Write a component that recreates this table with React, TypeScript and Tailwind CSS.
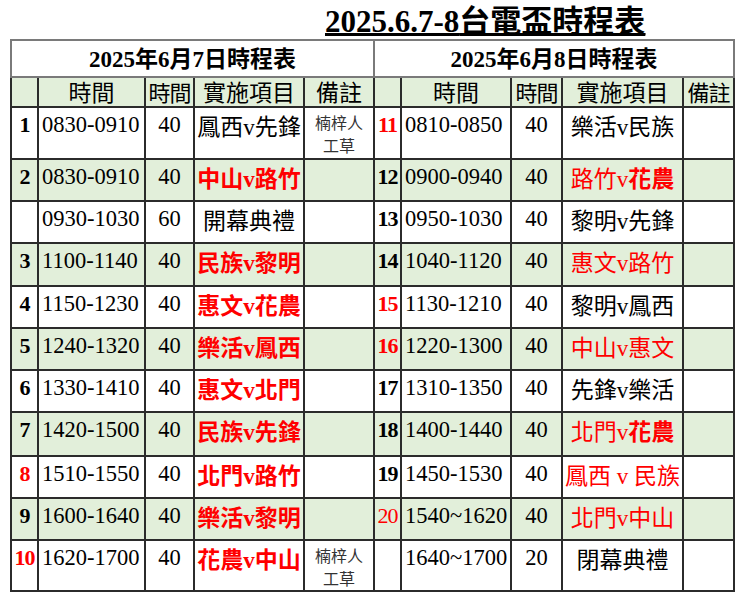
import React from 'react';

type Part = { t: string; bold?: boolean; serif?: boolean };

interface Row {
  no: string;
  noRed?: boolean;
  noBold?: boolean;
  time: string;
  mins: string;
  match: Part[];
  red?: boolean;
  note?: boolean;
}

const SERIF = "font-['Liberation_Serif','Noto_Sans_CJK_TC',serif]";
const SANS = "font-['Noto_Sans_CJK_TC','Noto_Sans',sans-serif]";

// "A v B" helper — the v is set in the serif face like the sheet
const m = (a: string, b: string, opts: { bold?: boolean; boldB?: boolean; spaced?: boolean } = {}): Part[] => [
  { t: a, bold: opts.bold },
  { t: opts.spaced ? ' v ' : 'v', serif: true, bold: opts.bold },
  { t: b, bold: opts.bold || opts.boldB },
];

const day7: Row[] = [
  { no: '1', time: '0830-0910', mins: '40', match: m('鳳西', '先鋒'), note: true },
  { no: '2', time: '0830-0910', mins: '40', match: m('中山', '路竹', { bold: true }), red: true },
  { no: '', time: '0930-1030', mins: '60', match: [{ t: '開幕典禮' }] },
  { no: '3', time: '1100-1140', mins: '40', match: m('民族', '黎明', { bold: true }), red: true },
  { no: '4', time: '1150-1230', mins: '40', match: m('惠文', '花農', { bold: true }), red: true },
  { no: '5', time: '1240-1320', mins: '40', match: m('樂活', '鳳西', { bold: true }), red: true },
  { no: '6', time: '1330-1410', mins: '40', match: m('惠文', '北門', { bold: true }), red: true },
  { no: '7', time: '1420-1500', mins: '40', match: m('民族', '先鋒', { bold: true }), red: true },
  { no: '8', noRed: true, time: '1510-1550', mins: '40', match: m('北門', '路竹', { bold: true }), red: true },
  { no: '9', time: '1600-1640', mins: '40', match: m('樂活', '黎明', { bold: true }), red: true },
  { no: '10', noRed: true, time: '1620-1700', mins: '40', match: m('花農', '中山', { bold: true }), red: true, note: true },
];

const day8: Row[] = [
  { no: '11', noRed: true, time: '0810-0850', mins: '40', match: m('樂活', '民族') },
  { no: '12', time: '0900-0940', mins: '40', match: m('路竹', '花農', { boldB: true }), red: true },
  { no: '13', time: '0950-1030', mins: '40', match: m('黎明', '先鋒') },
  { no: '14', time: '1040-1120', mins: '40', match: m('惠文', '路竹'), red: true },
  { no: '15', noRed: true, time: '1130-1210', mins: '40', match: m('黎明', '鳳西') },
  { no: '16', noRed: true, time: '1220-1300', mins: '40', match: m('中山', '惠文'), red: true },
  { no: '17', time: '1310-1350', mins: '40', match: m('先鋒', '樂活') },
  { no: '18', time: '1400-1440', mins: '40', match: m('北門', '花農', { boldB: true }), red: true },
  { no: '19', time: '1450-1530', mins: '40', match: m('鳳西', '民族', { spaced: true }), red: true },
  { no: '20', noRed: true, noBold: true, time: '1540~1620', mins: '40', match: m('北門', '中山'), red: true },
  { no: '', time: '1640~1700', mins: '20', match: [{ t: '閉幕典禮' }] },
];

const rowHeights = ['h-[52px]', 'h-[42px]', 'h-[42px]', 'h-[43px]', 'h-[42px]', 'h-[42px]', 'h-[42px]', 'h-[44px]', 'h-[42px]', 'h-[42px]', 'h-[50px]'];

const cell = 'border-2 border-[#2b2b2b] p-0 align-top';

const Match: React.FC<{ parts: Part[]; red?: boolean }> = ({ parts, red }) => (
  <div className={`text-center text-[23px] leading-[34px] whitespace-nowrap ${SANS} ${red ? 'text-[#ff0000]' : 'text-black'}`}>
    {parts.map((p, i) => (
      <span key={i} className={`${p.bold ? 'font-bold' : 'font-normal'} ${p.serif ? "font-['Liberation_Serif',serif]" : ''}`}>
        {p.t}
      </span>
    ))}
  </div>
);

const Note = () => (
  <div className={`pt-[3px] text-center text-[16px] leading-[23px] text-[#333] ${SANS}`}>
    <div>楠梓人</div>
    <div>工草</div>
  </div>
);

const Cells: React.FC<{ r: Row }> = ({ r }) => (
  <>
    <td className={cell}>
      <div
        className={`text-center text-[22px] leading-[34px] tracking-[-1px] ${SERIF} ${r.noBold ? 'font-normal' : 'font-bold'} ${
          r.noRed ? 'text-[#ff0000]' : 'text-black'
        }`}
      >
        {r.no}
      </div>
    </td>
    <td className={cell}>
      <div className={`pl-[3px] text-[22.5px] leading-[34px] whitespace-nowrap ${SERIF}`}>{r.time}</div>
    </td>
    <td className={cell}>
      <div className={`text-center text-[22.5px] leading-[34px] ${SERIF}`}>{r.mins}</div>
    </td>
    <td className={cell}>
      <Match parts={r.match} red={r.red} />
    </td>
  </>
);

const Head = () => (
  <>
    <td className={cell} />
    <td className={`${cell} text-center text-[23px] leading-[27px] ${SANS}`}>時間</td>
    <td className={`${cell} text-center text-[22px] leading-[27px] tracking-[-1px] ${SANS}`}>時間</td>
    <td className={`${cell} text-center text-[23px] leading-[27px] ${SANS}`}>實施項目</td>
  </>
);

export default function App() {
  return (
    <div className="w-[750px] h-[603px] bg-white text-black">
      <div className="h-[39px] pl-[325px] pt-[2px]">
        <div className="flex items-baseline text-[31px] leading-[34px] font-bold underline underline-offset-[1px] decoration-[2px] whitespace-nowrap">
          <span className="font-['Liberation_Serif',serif] underline">2025.6.7-8</span>
          <span className={`${SANS} underline`}>台電盃時程表</span>
        </div>
      </div>

      <table className="ml-[10px] w-[723px] table-fixed border-collapse">
        <colgroup>
          <col className="w-[27px]" />
          <col className="w-[107px]" />
          <col className="w-[49px]" />
          <col className="w-[110px]" />
          <col className="w-[70px]" />
          <col className="w-[27px]" />
          <col className="w-[110px]" />
          <col className="w-[51px]" />
          <col className="w-[121px]" />
          <col className="w-[51px]" />
        </colgroup>
        <tbody>
          <tr className="h-[37px]">
            <td colSpan={5} className="border-2 border-[#7a7a7a] p-0 text-center align-middle">
              <DayTitle d="7" />
            </td>
            <td colSpan={5} className="border-2 border-[#7a7a7a] p-0 text-center align-middle">
              <DayTitle d="8" />
            </td>
          </tr>
          <tr className="h-[30px] bg-[#e2efda]">
            <Head />
            <td className={`${cell} text-center text-[23px] leading-[27px] ${SANS}`}>備註</td>
            <Head />
            <td className={`${cell} text-center text-[22px] leading-[27px] tracking-[-1px] ${SANS}`}>備註</td>
          </tr>
          {day7.map((r, i) => (
            <tr key={i} className={`${rowHeights[i]} ${i % 2 === 1 ? 'bg-[#e2efda]' : 'bg-white'}`}>
              <Cells r={r} />
              <td className={cell}>{r.note && <Note />}</td>
              <Cells r={day8[i]} />
              <td className={cell} />
            </tr>
          ))}
        </tbody>
      </table>
    </div>
  );
}

function DayTitle({ d }: { d: string }) {
  return (
    <div className="text-[23px] leading-[30px] font-bold whitespace-nowrap">
      <span className="font-['Liberation_Serif',serif]">2025</span>
      <span className={SANS}>年</span>
      <span className="font-['Liberation_Serif',serif]">6</span>
      <span className={SANS}>月</span>
      <span className="font-['Liberation_Serif',serif]">{d}</span>
      <span className={SANS}>日時程表</span>
    </div>
  );
}
